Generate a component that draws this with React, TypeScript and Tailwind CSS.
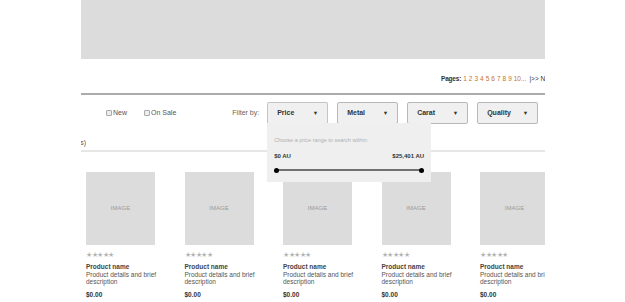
import React from 'react'

const pages = ['1', '2', '3', '4', '5', '6', '7', '8', '9', '10...']

const filters = ['Price', 'Metal', 'Carat', 'Quality']

const Stars: React.FC = () => (
  <div className="flex h-[6px] items-center text-[6.5px] leading-none text-[#b5b5b5]">
    {[0, 1, 2, 3, 4].map((i) => (
      <span key={i} className="w-[5.6px]">
        ★
      </span>
    ))}
  </div>
)

const ProductCard: React.FC = () => (
  <div className="w-[69px] shrink-0">
    <div className="flex h-[73px] items-center justify-center bg-[#dcdcdc] text-[6px] text-[#9a9a9a]">
      IMAGE
    </div>
    <div className="mt-[7px]">
      <Stars />
    </div>
    <div className="mt-[5px] text-[6.5px] font-bold leading-[7px] text-[#444]">
      Product name
    </div>
    <div className="mt-[1px] w-[72px] text-[6.5px] leading-[7px] text-[#555]">
      Product details and brief description
    </div>
    <div className="mt-[6px] text-[6.5px] font-bold leading-[7px] text-[#333]">
      $0.00
    </div>
  </div>
)

const FilterButton: React.FC<{ label: string; open?: boolean }> = ({
  label,
  open,
}) => (
  <div className="relative">
    <div
      className={
        open
          ? 'flex h-[22px] w-[61px] items-center justify-between rounded-t-[2px] border border-b-0 border-[#c4c4c4] bg-[#f0f0f0] px-[9px]'
          : 'flex h-[22px] w-[61px] items-center justify-between rounded-[2px] border border-[#b8b8b8] bg-[#f0f0f0] px-[9px]'
      }
    >
      <span className="text-[7px] font-bold text-[#333]">{label}</span>
      <span className="text-[5.5px] text-[#333]">▼</span>
    </div>
    {open && (
      <div className="absolute left-0 top-[21px] z-10 h-[59px] w-[164px] bg-[#efefef] px-[7px] pt-[14px]">
        <div className="text-[5.5px] leading-[7px] text-[#b0b0b0]">
          Choose a price range to search within:
        </div>
        <div className="mt-[9px] flex justify-between text-[6px] font-bold leading-[7px] text-[#333]">
          <span>$0 AU</span>
          <span>$25,401 AU</span>
        </div>
        <div className="relative mx-[2px] mt-[9px] h-[2px] bg-[#707070]">
          <span className="absolute -left-[2px] -top-[1.5px] h-[5px] w-[5px] rounded-full bg-black" />
          <span className="absolute -right-[2px] -top-[1.5px] h-[5px] w-[5px] rounded-full bg-black" />
        </div>
      </div>
    )}
  </div>
)

const App: React.FC = () => {
  return (
    <div className="h-[302px] w-[625px] overflow-hidden bg-white font-['Liberation_Sans',Arial,sans-serif]">
      <div className="ml-[81px] w-[464px]">
        <div className="h-[59px] bg-[#dcdcdc]" />
        <div className="overflow-hidden">
          <div className="flex h-[34px] items-center whitespace-nowrap pl-[360px] pt-[6px] text-[6.5px] text-[#333]">
            <span className="font-bold tracking-[-0.2px]">Pages:</span>
            {pages.map((p) => (
              <span key={p} className="ml-[2px] text-[#c0722e]">
                {p}
              </span>
            ))}
            <span className="ml-[3px]">|&gt;&gt; Next</span>
          </div>
        </div>
        <div className="h-[2px] bg-[#ababab]" />
        <div className="mt-[7px] flex h-[22px] items-center text-[7px] text-[#555]">
          <label className="ml-[25px] flex items-center">
            <span className="mr-[1px] h-[6px] w-[6px] rounded-[1px] border border-[#aaa] bg-[#eee]" />
            New
          </label>
          <label className="ml-[17px] flex items-center">
            <span className="mr-[1px] h-[6px] w-[6px] rounded-[1px] border border-[#aaa] bg-[#eee]" />
            On Sale
          </label>
          <span className="ml-[56px] text-[#666]">Filter by:</span>
          <div className="ml-[8px] flex gap-[9px]">
            {filters.map((f) => (
              <FilterButton key={f} label={f} open={f === 'Price'} />
            ))}
          </div>
        </div>
        <div className="flex h-[26px] items-end pb-[2px]">
          <div className="flex w-[5px] justify-end overflow-hidden">
            <span className="shrink-0 whitespace-nowrap text-[7px] text-[#555]">
              (24 products)
            </span>
          </div>
        </div>
        <div className="h-[2px] bg-[#e6e6e6]" />
        <div className="mt-[20px] flex gap-[29.5px] overflow-hidden pl-[5px]">
          {[0, 1, 2, 3, 4].map((i) => (
            <ProductCard key={i} />
          ))}
        </div>
      </div>
    </div>
  )
}

export default App
